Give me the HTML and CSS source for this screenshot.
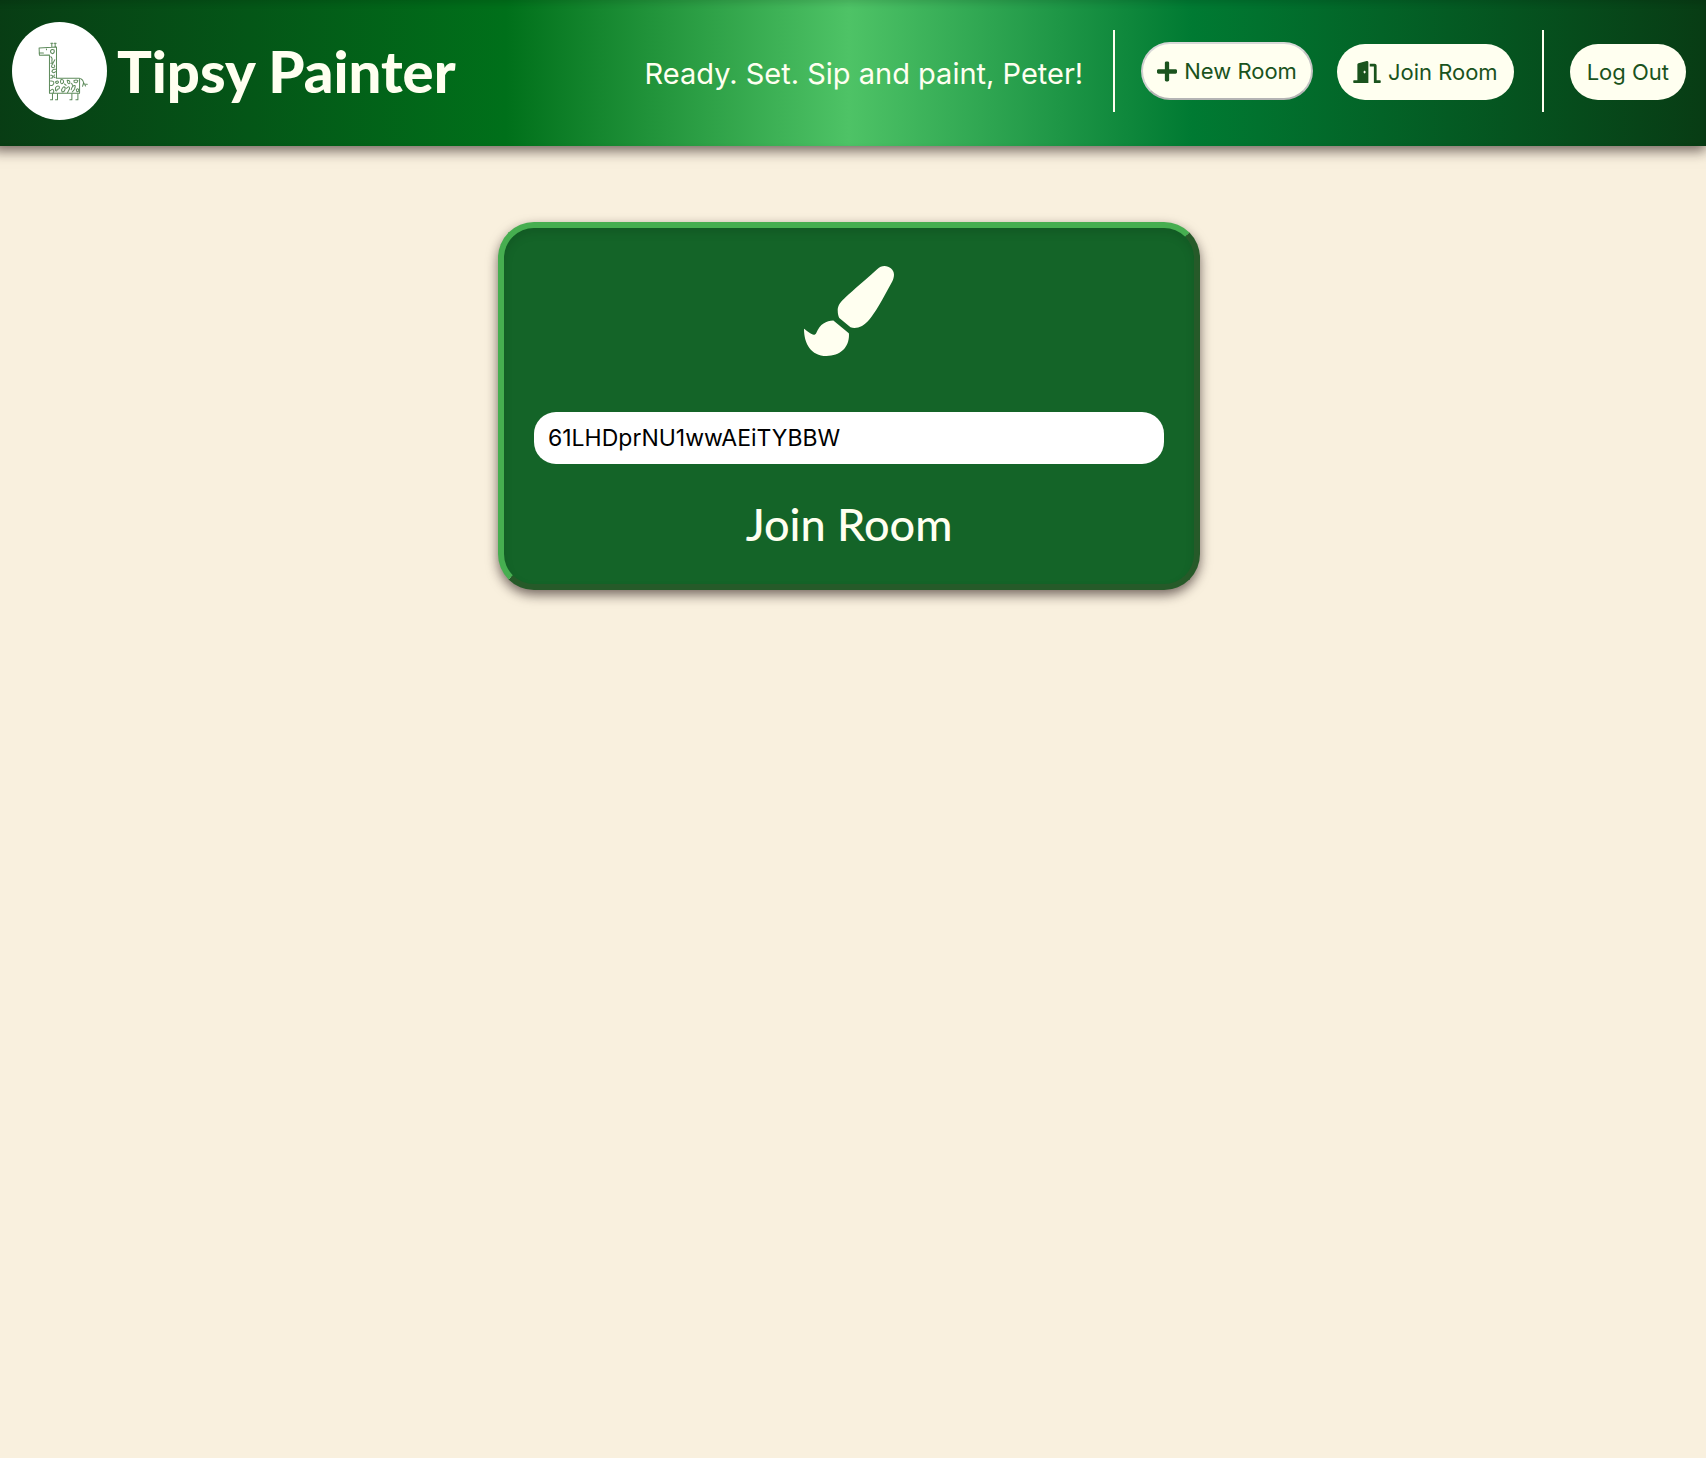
FILE: index.html
```html
<!DOCTYPE html>
<html lang="en">
<head>
<meta charset="utf-8">
<meta name="viewport" content="width=device-width, initial-scale=1">
<title>Tipsy Painter</title>
<link rel="stylesheet" href="styles.css">
</head>
<body>
<header class="navbar">
  <a class="brand" href="#">
    <svg class="logo" viewBox="22 23 284 294" preserveAspectRatio="none" aria-hidden="true">
      <ellipse cx="164" cy="170" rx="142" ry="147" fill="#fff"/>
      <g fill="none" stroke="#5d8a5b" stroke-width="3" stroke-linejoin="round" stroke-linecap="round">
        <path d="M134 122L104 123L103 101L155 98V192H222Q233 193 236 205M134 122V237H224V192M103 116H116M141 98V87M151 98V87M138 87H144M148 87H154M125 104V106"/>
        <path d="M236 205L233 216M236 205L242 215M237 209L247 210"/>
        <path d="M143 238V256H137M158 238V256H152M201 238V256H195M219 238V256H213"/>
        <path d="M137 110Q141 103 148 107Q150 115 144 118Q137 117 137 110M138 127Q144 132 141 140Q144 147 138 147M150 136L141 153Q138 160 147 160Q152 157 148 152M152 165Q143 163 141 171Q146 179 152 172M138 183Q144 181 144 190L138 192M149 182Q144 188 151 190"/>
        <path d="M137 200Q148 199 147 207Q143 216 137 213M152 203Q160 197 161 204Q155 211 152 203M168 196Q177 194 176 204Q169 213 167 203ZM187 198Q196 197 195 207Q188 211 187 198M207 199Q214 195 219 199Q217 208 208 204ZM137 229Q145 220 147 231L145 236M152 220Q157 213 163 216Q166 224 157 225Q157 233 152 228ZM170 227Q175 213 181 220Q181 232 172 233ZM185 222Q194 212 194 223L188 235M199 226Q203 212 211 214Q212 224 202 233M214 226Q221 220 222 229Q216 237 214 226M179 209L184 213M200 207L203 213"/>
      </g>
    </svg>
    <span class="brand-name">Tipsy Painter</span>
  </a>
  <p class="greeting">Ready. Set. Sip and paint, Peter!</p>
  <nav class="group rooms" aria-label="Rooms">
    <button class="pill pill-raised" type="button">
      <svg class="icon-plus" viewBox="0 0 448 512" aria-hidden="true"><path fill="currentColor" d="M416 208H272V64c0-17.67-14.33-32-32-32h-32c-17.67 0-32 14.33-32 32v144H32c-17.67 0-32 14.33-32 32v32c0 17.67 14.33 32 32 32h144v144c0 17.67 14.33 32 32 32h32c17.67 0 32-14.33 32-32V304h144c17.67 0 32-14.33 32-32v-32c0-17.67-14.33-32-32-32z"/></svg>
      <span>New Room</span>
    </button>
    <button class="pill" type="button">
      <svg class="icon-door" viewBox="0 0 640 512" aria-hidden="true"><path fill="currentColor" d="M624 448h-80V113.45C544 86.19 522.47 64 496 64H384v64h96v384h144c8.84 0 16-7.16 16-16v-32c0-8.84-7.16-16-16-16zM312.24 1.01l-192 49.74C105.99 54.44 96 67.7 96 82.92V448H16c-8.84 0-16 7.16-16 16v32c0 8.84 7.16 16 16 16h336V33.18c0-21.58-19.56-37.41-39.76-32.17zM264 288c-13.25 0-24-14.33-24-32s10.75-32 24-32 24 14.33 24 32-10.75 32-24 32z"/></svg>
      <span>Join Room</span>
    </button>
  </nav>
  <div class="group account">
    <button class="pill" type="button">Log Out</button>
  </div>
</header>
<main class="page">
  <form class="card">
    <svg class="brush" viewBox="0 0 512 512" aria-hidden="true"><path fill="currentColor" d="M167.02 309.34c-40.12 2.58-76.53 17.86-97.19 72.3-2.35 6.21-8 9.98-14.59 9.98-11.11 0-45.46-27.67-55.25-34.35C0 439.62 37.93 512 128 512c75.86 0 128-43.77 128-120.19 0-3.11-.65-6.08-.97-9.13l-88.01-73.34zM457.89 0c-15.16 0-29.37 6.71-40.21 16.45C213.27 199.05 192 203.34 192 257.09c0 13.7 3.25 26.76 8.73 38.7l63.82 53.18c7.21 1.8 14.64 3.03 22.39 3.03 62.11 0 98.11-45.47 211.16-256.46 7.38-14.35 13.9-29.85 13.9-45.99C512 20.64 486 0 457.89 0z"/></svg>
    <input class="room-code" type="text" aria-label="Room code" value="61LHDprNU1wwAEiTYBBW">
    <button class="join" type="submit">Join Room</button>
  </form>
</main>
</body>
</html>
```

FILE: styles.css
```css
* {
  box-sizing: border-box;
}

body {
  margin: 0;
  min-height: 100vh;
  background: #f9f0de;
  font-family: Inter, "Liberation Sans", sans-serif;
  color: ivory;
}

button,
input {
  font: inherit;
}

.navbar {
  display: flex;
  align-items: center;
  height: 146px;
  margin-left: -8px;
  padding: 0 20px 4px;
  background: linear-gradient(90deg, #083c14, #00701a 30%, #4ec366 50%, #007a32 70%, #083c14);
  box-shadow: 0 5px 12px rgba(30, 15, 15, 0.6), inset 0 3px 6px rgba(0, 0, 0, 0.12);
}

.brand {
  display: flex;
  align-items: center;
  gap: 10px;
  color: ivory;
  text-decoration: none;
}

.logo {
  width: 95px;
  height: 98px;
}

.brand-name {
  font-family: Lato, "Open Sans", sans-serif;
  font-size: 58px;
  font-weight: 900;
  line-height: 64px;
  white-space: nowrap;
}

.greeting {
  margin: 0 30px 0 auto;
  padding-top: 6px;
  font-size: 29px;
  line-height: 36px;
  white-space: nowrap;
}

.group {
  display: flex;
  align-items: flex-end;
  height: 82px;
  padding: 0 0 12px 26px;
  border-left: 2px solid ivory;
}

.rooms {
  gap: 24px;
  margin-right: 28px;
}

.pill {
  display: flex;
  align-items: center;
  gap: 7px;
  height: 56px;
  padding: 0 16px;
  border: 0;
  border-radius: 28px;
  background: ivory;
  color: #1a531d;
  font-size: 22px;
  white-space: nowrap;
}

.pill-raised {
  height: 58px;
  padding: 0 14px;
  border: 2px solid;
  border-color: #d8d8d8 #c4c4c4 #b4b4b4 #d0d0d0;
  border-radius: 29px;
}

.account .pill {
  padding: 0 17px;
}

.icon-plus {
  width: 20px;
  height: 23px;
}

.icon-door {
  width: 28px;
  height: 22px;
}

.page {
  padding: 76px 16px 76px 8px;
}

.card {
  display: flex;
  flex-direction: column;
  align-items: center;
  max-width: 702px;
  margin: 0 auto;
  padding: 38px 30px 30px;
  border: 6px solid;
  border-color: #46ae50 #265a29 #265a29 #46ae50;
  border-radius: 36px;
  background: #146428;
  box-shadow: 0 5px 12px rgba(30, 15, 15, 0.6), inset 0 5px 10px rgba(0, 0, 0, 0.1);
}

.brush {
  width: 90px;
  height: 90px;
  margin-bottom: 56px;
}

.room-code {
  width: 100%;
  height: 52px;
  padding: 0 14px;
  border: 0;
  border-radius: 22px;
  background: #fff;
  color: #000;
  font-size: 23px;
}

.join {
  margin-top: 30px;
  padding: 0;
  border: 0;
  background: none;
  color: ivory;
  font-family: Lato, "Open Sans", sans-serif;
  font-size: 45px;
  font-weight: 500;
  line-height: 60px;
}
```
